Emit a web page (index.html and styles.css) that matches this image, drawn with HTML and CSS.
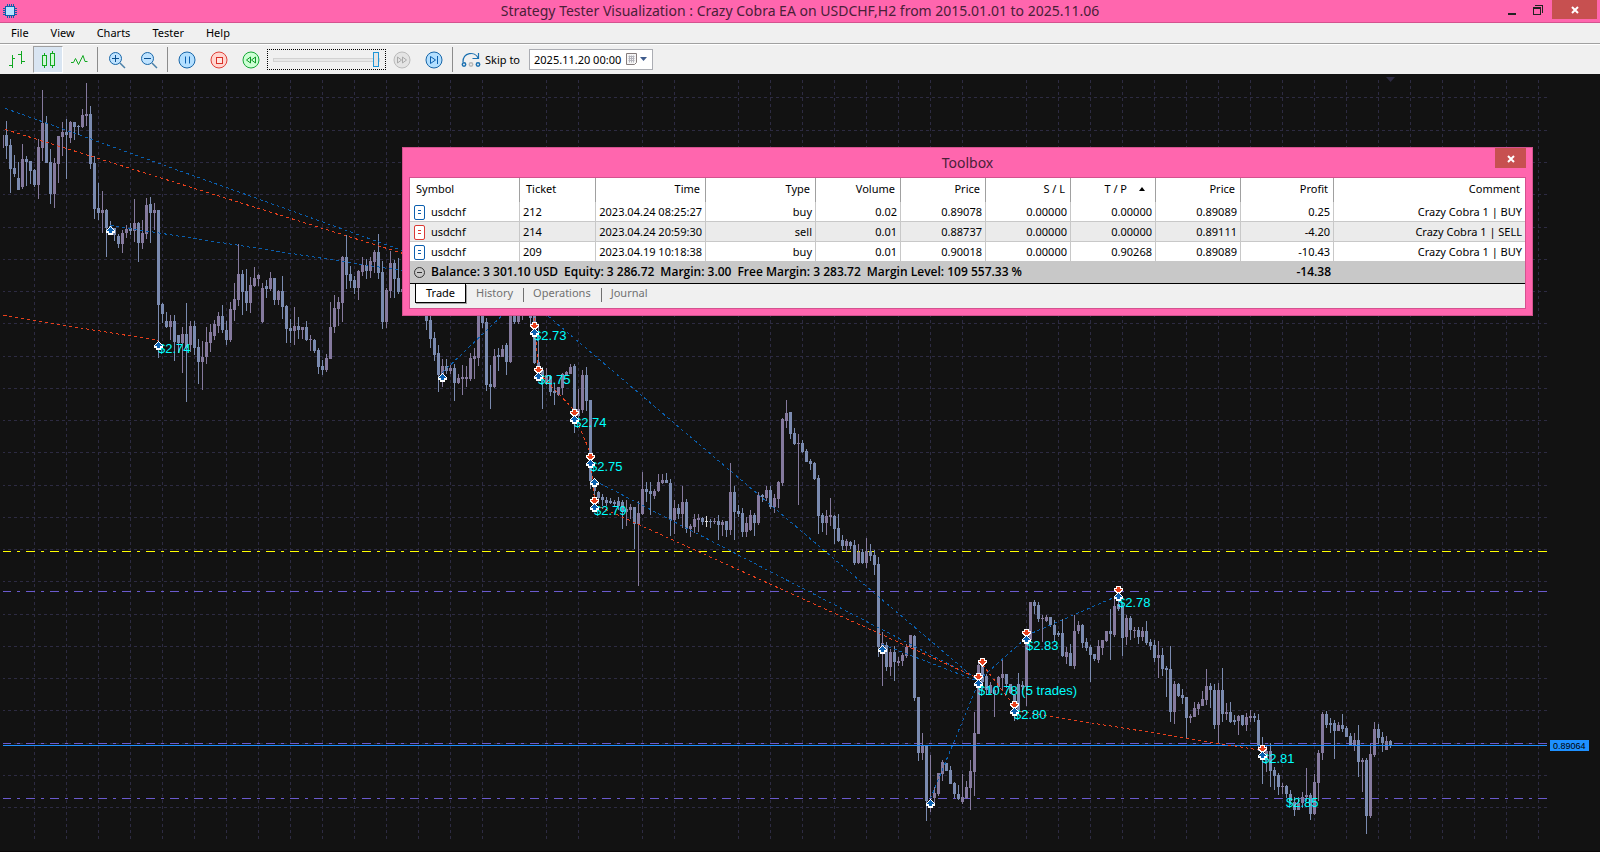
FILE: index.html
```html
<!DOCTYPE html>
<html lang="en">
<head>
    <meta charset="UTF-8">
    <meta name="viewport" content="width=device-width, initial-scale=1.0">
    <title>Strategy Tester Visualization</title>
    <link rel="stylesheet" href="styles.css">
</head>
<body>
    <header class="titlebar">
        <svg class="app-icon" width="16" height="16" viewBox="0 0 16 16" shape-rendering="crispEdges">
            <path d="M5.5 1v14M7.5 1v14M9.5 1v14M11.5 1v14M1 5.5h14M1 7.5h14M1 9.5h14M1 11.5h14" stroke="#1060a8"/>
            <rect x="3.5" y="3.5" width="9" height="9" rx="1" fill="#b9e2ff" stroke="#0b5fae"/>
        </svg>
        <h1 class="titlebar-text">Strategy Tester Visualization : Crazy Cobra EA on USDCHF,H2 from 2015.01.01 to 2025.11.06</h1>
        <div class="window-buttons">
            <button class="win-btn" aria-label="Minimize">
                <svg width="8" height="10" viewBox="0 0 8 10"><path d="M0 8h8v2H0z" fill="#222"/></svg>
            </button>
            <button class="win-btn" aria-label="Restore">
                <svg width="10" height="10" viewBox="0 0 10 10" shape-rendering="crispEdges" fill="#222"><path d="M2 0h8v8H9V1H2z"/><path d="M0 2h8v8H0zM1 4v5h6V4z" fill-rule="evenodd"/></svg>
            </button>
            <button class="win-close" aria-label="Close">
                <svg width="8" height="8" viewBox="0 0 8 8"><path d="M1 1l6 6M7 1L1 7" stroke="#fff" stroke-width="2"/></svg>
            </button>
        </div>
    </header>

    <nav class="menubar">
        <a href="#">File</a>
        <a href="#">View</a>
        <a href="#">Charts</a>
        <a href="#">Tester</a>
        <a href="#">Help</a>
    </nav>

    <div class="toolbar">
        <button class="tool" aria-label="Bar chart">
            <svg width="18" height="18" viewBox="0 0 18 18" shape-rendering="crispEdges"><path d="M4.5 4v13M1 14.5h3M4 7.5h3M13.5 0v13M10 3.5h3M14 10.5h3" stroke="#10a820" fill="none"/></svg>
        </button>
        <button class="tool active" aria-label="Candlesticks">
            <svg width="16" height="18" viewBox="0 0 16 18" shape-rendering="crispEdges"><path d="M2.5 4.5h4v10h-4zM10.5 2.5h4v12h-4zM4.5 2v2M4.5 15v2M12.5 0v2M12.5 15v2" stroke="#10a820" fill="#d0f8d8"/></svg>
        </button>
        <button class="tool" aria-label="Line chart">
            <svg width="18" height="18" viewBox="0 0 18 18"><path d="M1 11.5h2.5l2-4 3 6 4.5-9 2 6h2.5" stroke="#10a820" fill="none"/></svg>
        </button>
        <span class="sep"></span>
        <button class="tool" aria-label="Zoom in">
            <svg width="18" height="18" viewBox="0 0 18 18"><path d="M12 12l5 5" stroke="#4a80a8" stroke-width="1.5"/><circle cx="7.5" cy="7.5" r="6" fill="#bfe3ff" stroke="#1866a8"/><path d="M4 7.5h7M7.5 4v7" stroke="#0b4f90"/></svg>
        </button>
        <button class="tool" aria-label="Zoom out">
            <svg width="18" height="18" viewBox="0 0 18 18"><path d="M12 12l5 5" stroke="#4a80a8" stroke-width="1.5"/><circle cx="7.5" cy="7.5" r="6" fill="#bfe3ff" stroke="#1866a8"/><path d="M4 7.5h7" stroke="#0b4f90"/></svg>
        </button>
        <span class="sep"></span>
        <button class="tool" aria-label="Pause">
            <svg width="18" height="18" viewBox="0 0 18 18"><circle cx="9" cy="9" r="8" fill="#b3dfff" stroke="#1866a8"/><path d="M7.5 5.5v7M11.5 5.5v7" stroke="#0b5fae"/></svg>
        </button>
        <button class="tool" aria-label="Stop">
            <svg width="18" height="18" viewBox="0 0 18 18"><circle cx="9" cy="9" r="8" fill="#ffd6d0" stroke="#e04038"/><rect x="6.5" y="6.5" width="6" height="6" fill="#ffe6e0" stroke="#d83028"/></svg>
        </button>
        <button class="tool" aria-label="Slower">
            <svg width="18" height="18" viewBox="0 0 18 18"><circle cx="9" cy="9" r="8" fill="#ccffd4" stroke="#18a838"/><path d="M8.5 6v6l-4-3zM13.5 6v6l-4-3z" stroke="#109828" fill="none"/></svg>
        </button>
        <div class="speed"><input type="range" min="0" max="100" value="100" aria-label="Speed"></div>
        <button class="tool" aria-label="Faster" disabled>
            <svg width="18" height="18" viewBox="0 0 18 18"><circle cx="9" cy="9" r="8" fill="#e4e4e4" stroke="#bbb"/><path d="M4.5 6v6l4-3zM9.5 6v6l4-3z" stroke="#aaa" fill="none"/></svg>
        </button>
        <button class="tool" aria-label="Next">
            <svg width="18" height="18" viewBox="0 0 18 18"><circle cx="9" cy="9" r="8" fill="#b3dfff" stroke="#1866a8"/><path d="M5.5 5.5v7l5-3.5zM12.5 5v8" stroke="#0b5fae" fill="none"/></svg>
        </button>
        <span class="sep"></span>
        <label class="skip" for="skipDate">
            <svg width="20" height="16" viewBox="0 0 20 16" fill="none" stroke="#1b70b0"><path d="M2 10C2 0 14 -1 17 6M17.5 1v5.500h-6" stroke-width="1.2"/><circle cx="3" cy="12.5" r="1.700" stroke-width="1.5"/><circle cx="10" cy="12.5" r="1.700" stroke="#b8b8b8" stroke-width="1.5"/><circle cx="17" cy="12.5" r="1.700" stroke-width="1.5"/></svg>
            Skip to
        </label>
        <div class="date-box">
            <input id="skipDate" type="text" value="2025.11.20 00:00">
            <button class="date-drop" aria-label="Open calendar">
                <svg width="22" height="13" viewBox="0 0 22 13"><path d="M.5.5h10v9l-2 2h-8z" fill="#f6f6f6" stroke="#857c7c"/><path d="M2.5 3.5h6M2.5 5.5h6M2.5 7.5h6M3.5 2.5v7M5.5 2.5v7M7.5 2.5v7" stroke="#b4b4bc"/><path d="M14 4h7l-3.5 4z" fill="#3f5c8c"/></svg>
            </button>
        </div>
    </div>

    <main class="chart">
        <svg id="chart" viewBox="0 74 1600 777" preserveAspectRatio="xMinYMin meet">
            <defs>
                <g id="buy">
                    <path d="M0 -4h1v1h1v1h1v1h1v1h1v3h-2v2h-5v-2h-2v-3h1v-1h1v-1h1v-1h1z" fill="#fff"/>
                    <path d="M0 -3h1v1h1v1h1v1h1v1h-2v2h-3v-2h-2v-1h1v-1h1v-1h1z" fill="#0a60b0"/>
                </g>
                <g id="sell">
                    <path d="M-2 -4h5v2h2v3h-1v1h-1v1h-1v1h-1v1h-1v-1h-1v-1h-1v-1h-1v-1h-1v-3h2z" fill="#fff"/>
                    <path d="M-1 -3h3v2h2v1h-1v1h-1v1h-1v1h-1v-1h-1v-1h-1v-1h-1v-1h2z" fill="#e8401c"/>
                </g>
            </defs>
        </svg>

        <section class="toolbox">
            <div class="toolbox-title">
                <h2>Toolbox</h2>
                <button class="toolbox-close" aria-label="Close toolbox">
                    <svg width="8" height="8" viewBox="0 0 8 8"><path d="M1 1l6 6M7 1L1 7" stroke="#fff" stroke-width="2"/></svg>
                </button>
            </div>
            <div class="toolbox-body">
                <table class="trades">
                    <colgroup>
                        <col class="w-symbol"><col class="w-ticket"><col class="w-wide"><col class="w-wide"><col class="w-price">
                        <col class="w-price"><col class="w-price"><col class="w-price"><col class="w-price"><col class="w-profit"><col>
                    </colgroup>
                    <thead>
                        <tr>
                            <th class="left">Symbol</th><th class="left">Ticket</th><th>Time</th><th>Type</th><th>Volume</th><th>Price</th>
                            <th>S / L</th><th>T / P<span class="sort"></span></th><th>Price</th><th>Profit</th><th>Comment</th>
                        </tr>
                    </thead>
                    <tbody>
                        <tr>
                            <td class="symbol"><svg class="order" width="11" height="15" viewBox="0 0 11 15"><rect x=".5" y=".5" width="10" height="14" rx="1.5"/><path d="M4 5.5h3M4 8.5h3"/></svg>usdchf</td>
                            <td class="left">212</td><td>2023.04.24 08:25:27</td><td>buy</td><td>0.02</td><td>0.89078</td>
                            <td>0.00000</td><td>0.00000</td><td>0.89089</td><td>0.25</td><td>Crazy Cobra 1 | BUY</td>
                        </tr>
                        <tr class="alt">
                            <td class="symbol"><svg class="order order-sell" width="11" height="15" viewBox="0 0 11 15"><rect x=".5" y=".5" width="10" height="14" rx="1.5"/><path d="M4 5.5h3M4 8.5h3"/></svg>usdchf</td>
                            <td class="left">214</td><td>2023.04.24 20:59:30</td><td>sell</td><td>0.01</td><td>0.88737</td>
                            <td>0.00000</td><td>0.00000</td><td>0.89111</td><td>-4.20</td><td>Crazy Cobra 1 | SELL</td>
                        </tr>
                        <tr>
                            <td class="symbol"><svg class="order" width="11" height="15" viewBox="0 0 11 15"><rect x=".5" y=".5" width="10" height="14" rx="1.5"/><path d="M4 5.5h3M4 8.5h3"/></svg>usdchf</td>
                            <td class="left">209</td><td>2023.04.19 10:18:38</td><td>buy</td><td>0.01</td><td>0.90018</td>
                            <td>0.00000</td><td>0.90268</td><td>0.89089</td><td>-10.43</td><td>Crazy Cobra 1 | BUY</td>
                        </tr>
                    </tbody>
                    <tfoot>
                        <tr>
                            <td class="symbol" colspan="9"><svg width="11" height="11" viewBox="0 0 11 11" fill="none" stroke="#333"><circle cx="5.5" cy="5.5" r="5"/><path d="M3 5.5h5"/></svg><span>Balance: 3 301.10 USD</span><span>Equity: 3 286.72</span><span>Margin: 3.00</span><span>Free Margin: 3 283.72</span><span>Margin Level: 109 557.33 %</span></td>
                            <td>-14.38</td>
                            <td></td>
                        </tr>
                    </tfoot>
                </table>
                <div class="tabs">
                    <button class="tab current">Trade</button>
                    <button class="tab">History</button>
                    <button class="tab">Operations</button>
                    <button class="tab">Journal</button>
                </div>
            </div>
        </section>
    </main>

    <script src="chart.js"></script>
</body>
</html>
```

FILE: styles.css
```css
* {
    margin: 0;
    padding: 0;
    box-sizing: border-box;
}

body {
    font-family: "Segoe UI", "Noto Sans", sans-serif;
    font-size: 11px;
    color: #000;
    background: #121212;
    min-height: 100vh;
    display: flex;
    flex-direction: column;
}

button {
    font: inherit;
    color: inherit;
    border: none;
    background: none;
}

/* Title bar */
.titlebar {
    position: relative;
    height: 23px;
    background: #ff66ae;
    border-bottom: 1px solid #d4528f;
    display: flex;
    align-items: center;
    justify-content: center;
}

.app-icon {
    position: absolute;
    left: 2px;
    top: 3px;
}

.titlebar-text {
    font-size: 14px;
    font-weight: 400;
    line-height: 22px;
    color: #4a2038;
}

.window-buttons {
    position: absolute;
    top: 0;
    right: 3px;
    display: flex;
    height: 19px;
}

.win-btn {
    width: 26px;
    display: flex;
    align-items: center;
    justify-content: center;
}

.win-close {
    width: 45px;
    margin-left: 1px;
    background: #c75050;
}

/* Menu */
.menubar {
    height: 21px;
    background: #f0f0f0;
    border-bottom: 1px solid #a0a0a0;
    display: flex;
    gap: 22px;
    padding-left: 11px;
}

.menubar a {
    color: #000;
    text-decoration: none;
    line-height: 20px;
}

/* Toolbar */
.toolbar {
    height: 30px;
    background: #f0f0f0;
    border-top: 1px solid #fff;
    display: flex;
    align-items: center;
}

.tool {
    width: 32px;
    height: 28px;
    display: flex;
    align-items: center;
    justify-content: center;
}

.tool.active {
    width: 30px;
    height: 27px;
    background: #d9e5f2;
    border: 1px solid #fff;
    border-top-color: #a0a0a0;
    border-left-color: #a0a0a0;
}

.tool:first-child {
    width: 33px;
}

.sep {
    width: 1px;
    height: 25px;
    margin: 0 3px 0 2px;
    background: #8c8c8c;
}

.speed {
    width: 119px;
    height: 21px;
    padding: 0 5px;
    border: 1px dotted #000;
    display: flex;
    align-items: center;
}

.speed input {
    width: 100%;
    height: 16px;
    appearance: none;
    background: none;
}

.speed input::-webkit-slider-runnable-track {
    height: 4px;
    background: #e7e7e7;
    border: 1px solid #d2d2d2;
}

.speed input::-webkit-slider-thumb {
    appearance: none;
    width: 6px;
    height: 15px;
    margin-top: -7px;
    background: #e5e5e5;
    border: 1px solid #1e96d8;
}

.skip {
    display: flex;
    align-items: center;
    gap: 4px;
    margin-left: 5px;
}

.date-box {
    width: 124px;
    height: 21px;
    margin-left: 9px;
    background: #fff;
    border: 1px solid #abadb3;
    display: flex;
    align-items: center;
}

.date-box input {
    width: 96px;
    padding-left: 4px;
    border: none;
    background: none;
    font: inherit;
}

.date-drop {
    display: flex;
}

/* Chart */
.chart {
    position: relative;
    flex: 1;
    background: #121212;
    border-bottom: 1px solid #0a0708;
}

#chart {
    display: block;
    width: 100%;
}

.grid {
    stroke: #2d2b42;
    stroke-dasharray: 3 3;
}

.level {
    stroke-dasharray: 9 6 3 6;
}

.trend {
    fill: none;
    stroke-dasharray: 3 3;
}

.trade-label {
    font: 13px "Liberation Sans", Arial, sans-serif;
    fill: #00ffff;
}

.price-label {
    font: 9px "Liberation Sans", Arial, sans-serif;
    fill: #000;
}

/* Toolbox window */
.toolbox {
    position: absolute;
    top: 73px;
    left: 402px;
    right: 67px;
    padding: 0 6px 6px;
    background: #ff66ae;
    border: 1px solid #d4528f;
}

.toolbox-title {
    height: 29px;
    display: flex;
    justify-content: center;
    position: relative;
}

.toolbox-title h2 {
    font-size: 14px;
    font-weight: 400;
    line-height: 29px;
    color: #4a2038;
}

.toolbox-close {
    position: absolute;
    top: 0;
    right: 0;
    width: 31px;
    height: 20px;
    background: #c75050;
}

.toolbox-body {
    background: #f0f0f0;
    border: 1px solid #d4528f;
}

.trades {
    width: 100%;
    table-layout: fixed;
    border-spacing: 0;
    background: #fff;
}

.w-symbol,
.w-wide {
    width: 110px;
}

.w-ticket {
    width: 76px;
}

.w-price {
    width: 85px;
}

.w-profit {
    width: 93px;
}

.trades th,
.trades td {
    text-align: right;
    white-space: nowrap;
    border-right: 1px solid #c8c8c8;
    padding: 0 3px;
}

.trades th {
    height: 24px;
    padding: 0 5px 2px;
    line-height: 20px;
    font-weight: 400;
    border-right-color: #a0a0a0;
}

.trades td {
    height: 20px;
    line-height: 18px;
    border-bottom: 1px solid #c8c8c8;
}

.trades th.left {
    text-align: left;
    padding-left: 6px;
}

.trades td.left {
    text-align: left;
}

.trades th:last-child,
.trades td:last-child {
    border-right: none;
}

.trades .alt td {
    background: #ebebeb;
}

.trades td.symbol {
    text-align: left;
    padding-left: 4px;
}

.symbol svg {
    vertical-align: middle;
    margin-right: 6px;
}

.order {
    fill: #fff;
    stroke: #0b5fae;
}

.order-sell {
    stroke: #d83a34;
}

.sort {
    display: inline-block;
    margin: 0 5px 2px 12px;
    border: 3px solid transparent;
    border-top: none;
    border-bottom: 4px solid #000;
}

.trades tfoot td {
    height: 21px;
    padding-bottom: 2px;
    background: #c8c8c8;
    border: none;
    font-family: "Open Sans", "Noto Sans", sans-serif;
    font-size: 12px;
    font-weight: 600;
}

.trades tfoot span {
    margin-right: 6px;
}

.tabs {
    display: flex;
    height: 25px;
    padding-left: 5px;
    border-top: 1px solid #000;
    align-items: flex-start;
}

.tab {
    position: relative;
    padding: 0 10px;
    line-height: 18px;
    color: #707070;
}

.tab.current {
    color: #000;
    background: #fff;
    border: 1px solid #000;
    border-top: none;
    box-shadow: 1px 1px 0 #a0a0a0;
}

.tab + .tab + .tab {
    background: linear-gradient(#707070, #707070) left 4px / 1px 14px no-repeat;
}
```

FILE: chart.js
```js
const SVG = 'http://www.w3.org/2000/svg';
const chart = document.getElementById('chart');

// x, high, low, body top, body bottom, direction (1 up, 0 down)
const candles = [
    [2,135,148,135,148,1],[6,121,159,135,146,0],[10,139,193,145,169,0],[14,155,177,168,174,0],[18,162,190,178,190,0],
    [22,144,189,159,187,1],[26,156,186,159,162,0],[30,161,184,161,171,0],[34,169,187,170,185,0],[38,139,199,147,185,1],
    [42,90,161,123,148,1],[46,116,163,123,163,0],[50,149,204,162,194,0],[54,158,208,163,194,1],[58,136,183,136,164,1],
    [62,122,156,132,137,1],[66,119,179,132,135,0],[70,121,143,122,138,1],[74,122,140,122,127,0],[78,125,135,126,127,0],
    [82,109,128,115,127,1],[86,83,126,114,116,1],[90,106,169,114,164,0],[94,156,219,163,209,0],[98,183,220,208,213,0],
    [102,191,233,210,213,1],[106,209,257,210,228,0],[110,221,233,226,232,0],[114,228,241,228,235,0],[118,234,248,236,244,0],
    [122,230,253,233,244,1],[126,225,238,229,233,1],[130,223,235,228,231,0],[134,199,242,223,231,1],[138,222,262,223,243,0],
    [142,220,249,233,243,1],[146,198,239,205,234,1],[150,197,243,204,213,0],[154,203,230,210,213,1],[158,210,358,210,305,0],
    [162,303,323,304,314,0],[166,312,328,321,327,0],[170,315,340,321,327,1],[174,315,361,321,342,0],[178,335,353,335,343,0],
    [182,327,373,334,343,1],[186,303,402,334,348,0],[190,321,352,326,345,1],[194,321,355,326,348,0],[198,339,384,347,362,0],
    [202,341,390,357,362,1],[206,327,364,342,357,1],[210,324,352,332,343,1],[214,320,340,324,336,1],[218,312,333,316,326,1],
    [222,305,333,316,330,0],[226,321,345,330,340,0],[230,302,342,309,340,1],[234,283,321,299,310,1],[238,244,306,274,300,1],
    [242,270,315,274,292,0],[246,269,311,291,303,0],[250,277,313,285,303,1],[254,267,287,278,286,1],[258,274,286,275,279,1],
    [262,283,323,288,322,1],[266,280,298,286,289,0],[270,272,291,278,289,1],[274,278,305,278,300,0],[278,290,305,291,300,1],
    [282,276,319,291,307,0],[286,305,343,306,329,0],[290,319,343,328,331,0],[294,307,345,326,331,1],[298,317,339,326,330,0],
    [302,327,339,327,330,1],[306,321,341,327,340,0],[310,335,351,339,340,1],[314,339,353,340,351,0],[318,348,374,350,367,0],
    [322,360,375,366,370,0],[326,354,372,358,370,1],[330,302,359,327,359,1],[334,295,333,308,327,1],[338,297,326,302,309,1],
    [342,256,322,257,303,1],[346,235,289,257,275,0],[350,266,288,274,281,0],[354,276,294,280,288,0],[358,270,300,271,288,1],
    [362,257,276,265,272,1],[366,259,279,265,271,0],[370,257,278,261,271,1],[374,250,273,252,262,1],[378,234,279,252,273,0],
    [382,261,329,272,322,0],[386,288,328,290,322,1],[390,251,298,263,291,1],[394,260,298,263,279,0],[398,258,294,278,292,0],
    [402,280,300,289,292,1],[426,300,330,300,321,0],[430,315,348,320,339,0],[434,332,361,338,355,0],[438,345,392,353,375,0],
    [442,359,387,366,375,1],[446,359,374,366,371,0],[450,365,374,368,371,1],[454,364,401,368,383,0],[458,374,384,378,383,1],
    [462,365,395,377,379,1],[466,366,387,377,379,1],[470,353,381,358,379,1],[474,348,379,356,359,1],[478,300,366,300,358,1],
    [482,300,328,300,323,0],[486,318,391,322,385,0],[490,365,409,384,387,0],[494,349,388,356,387,1],[498,348,371,355,357,0],
    [502,345,357,349,357,1],[506,343,375,345,362,0],[510,300,363,300,362,1],[514,300,324,300,322,0],[518,300,324,300,322,1],
    [522,300,320,300,310,1],[530,300,325,300,318,0],[534,300,364,300,363,0],[538,327,375,362,375,0],[542,367,409,370,380,0],
    [546,368,385,375,384,1],[550,375,396,376,392,0],[554,383,405,391,393,0],[558,387,396,387,395,1],[562,373,395,374,388,1],
    [566,371,376,372,376,1],[570,364,374,367,374,1],[574,364,433,366,410,0],[578,389,420,409,416,1],[582,370,413,375,410,1],
    [586,367,411,375,401,0],[590,400,489,400,481,0],[594,480,506,483,491,0],[598,491,504,492,498,0],[602,494,506,497,500,0],
    [606,497,506,500,503,0],[610,498,504,501,503,0],[614,500,506,502,504,0],[618,497,510,501,506,0],[622,500,529,502,512,0],
    [626,500,526,509,512,1],[630,504,519,507,510,1],[634,507,549,507,524,0],[638,501,586,513,524,1],[642,472,515,489,514,1],
    [646,482,502,489,492,0],[650,482,515,491,494,0],[654,489,499,491,496,1],[658,474,492,482,491,1],[662,474,484,480,483,1],
    [666,473,483,480,483,0],[670,479,536,483,520,0],[674,500,534,508,520,1],[678,504,519,508,514,0],[682,486,528,502,514,1],
    [686,499,533,502,529,0],[690,524,537,526,529,1],[694,514,533,519,527,1],[698,514,532,518,520,1],[702,517,525,518,522,0],
    [706,516,527,521,522,2],[710,519,528,521,522,0],[714,518,524,521,522,1],[718,515,540,521,525,0],[722,520,536,522,525,1],
    [726,521,537,521,530,0],[730,463,535,492,530,1],[734,486,540,492,512,0],[738,505,517,511,514,0],[742,508,537,513,532,0],
    [746,517,537,523,532,1],[750,510,531,515,530,1],[754,513,536,515,523,0],[758,492,525,495,523,1],[762,494,502,495,497,0],
    [766,486,501,490,498,1],[770,486,509,490,507,0],[774,494,513,498,507,1],[778,481,508,482,499,1],[782,418,486,419,483,1],
    [786,400,428,413,421,1],[790,412,439,412,434,0],[794,428,445,433,444,0],[798,434,505,443,444,1],[802,440,453,443,452,0],
    [806,449,462,451,462,0],[810,459,470,461,464,0],[814,462,480,463,479,0],[818,475,534,478,516,0],[822,513,532,515,523,0],
    [826,510,535,516,523,1],[830,498,526,515,517,1],[834,515,544,516,529,0],[838,514,542,528,541,0],[842,535,550,540,546,0],
    [846,539,552,541,546,1],[850,541,549,542,546,0],[854,540,565,545,563,0],[858,544,564,552,563,1],[862,549,564,552,563,0],
    [866,538,568,551,563,1],[870,544,561,551,556,0],[874,550,575,555,565,0],[878,557,657,564,647,0],[882,632,686,643,652,1],
    [886,642,671,645,667,0],[890,649,676,652,667,1],[894,646,681,652,662,0],[898,657,666,661,663,1],[902,653,666,655,661,1],
    [906,644,658,647,656,1],[910,635,648,635,647,1],[914,635,701,636,698,0],[918,697,761,697,753,0],[922,733,760,745,753,1],
    [926,745,821,746,801,0],[930,755,812,800,804,1],[934,787,805,793,798,1],[938,773,796,773,794,1],[942,760,781,762,774,1],
    [946,763,771,763,771,0],[950,766,784,770,784,0],[954,782,798,783,794,0],[958,785,800,794,799,0],[962,774,804,797,802,1],
    [966,781,799,787,798,1],[970,760,810,771,788,1],[974,712,796,733,772,1],[978,660,734,665,734,1],[982,660,690,662,682,0],
    [986,674,695,676,690,0],[990,682,694,685,693,1],[994,687,717,690,694,1],[998,676,692,677,687,1],[1002,659,690,674,678,1],
    [1006,674,688,674,684,0],[1010,684,694,684,693,0],[1014,694,721,695,710,0],[1018,673,712,684,710,0],[1022,681,690,685,687,0],
    [1026,640,706,640,687,1],[1030,602,641,602,640,1],[1034,600,614,602,606,0],[1038,602,622,605,619,0],[1042,615,642,618,619,1],
    [1046,615,622,617,621,1],[1050,617,627,617,625,0],[1054,620,641,625,635,0],[1058,631,637,633,635,0],[1062,619,657,633,656,0],
    [1066,647,664,652,657,1],[1070,644,666,653,666,0],[1074,615,669,631,666,1],[1078,621,634,625,631,1],[1082,624,648,625,643,0],
    [1086,638,651,642,648,0],[1090,645,682,647,655,0],[1094,654,661,654,659,0],[1098,640,663,646,660,1],[1102,640,655,640,648,1],
    [1106,631,642,631,641,1],[1110,609,660,631,634,0],[1114,596,637,606,635,1],[1118,594,611,604,609,0],[1122,603,656,606,638,0],
    [1126,615,645,618,637,1],[1130,616,640,618,630,0],[1134,627,638,630,631,1],[1138,627,644,630,637,0],[1142,627,641,631,637,1],
    [1146,621,645,631,643,0],[1150,639,650,642,646,0],[1154,640,662,645,658,0],[1158,641,678,655,658,1],[1162,648,676,655,669,0],
    [1166,666,697,668,670,0],[1170,646,722,669,712,0],[1174,681,724,684,712,1],[1178,683,697,684,696,0],[1182,689,704,695,698,0],
    [1186,697,739,697,718,0],[1190,714,723,716,718,1],[1194,702,717,708,717,1],[1198,702,715,704,709,1],[1202,691,706,699,706,1],
    [1206,669,705,686,700,1],[1210,683,708,686,690,0],[1214,684,729,690,725,0],[1218,683,744,690,725,1],[1222,668,722,690,714,0],
    [1226,703,720,712,714,1],[1230,702,723,712,722,0],[1234,715,725,720,722,0],[1238,715,735,716,721,1],[1242,715,726,715,725,0],
    [1246,713,731,717,725,1],[1250,710,722,716,718,1],[1254,713,722,716,718,0],[1258,714,751,720,745,0],[1262,737,784,745,757,0],
    [1266,745,772,751,760,1],[1270,743,787,751,771,0],[1274,767,790,770,776,0],[1278,773,795,775,787,0],[1282,783,794,786,787,1],
    [1286,785,798,786,794,0],[1290,790,805,794,801,0],[1294,797,816,802,810,0],[1298,797,810,803,810,1],[1302,792,808,797,803,1],
    [1306,768,801,795,797,1],[1310,793,820,795,814,0],[1314,774,815,782,814,1],[1318,750,801,753,783,1],[1322,712,760,714,753,1],
    [1326,711,728,714,725,0],[1330,718,733,723,725,0],[1334,720,759,723,731,0],[1338,722,731,725,731,1],[1342,714,732,725,729,0],
    [1346,726,737,728,737,0],[1350,733,746,736,746,0],[1354,733,751,740,745,1],[1358,725,777,740,762,0],[1362,758,792,760,762,1],
    [1366,758,834,760,816,0],[1370,744,818,754,816,1],[1374,722,757,729,755,1],[1378,724,744,729,738,0],[1382,732,752,737,743,0],
    [1386,736,750,741,750,1],[1390,740,748,741,746,0]
];

const BLUE = '#0a5fae';
const RED = '#e8401c';

// x1, y1, x2, y2, colour
const trends = [
    [5,108,536,298,BLUE],[110,225,530,290,BLUE],[442,372,534,284,BLUE],[534,304,978,681,BLUE],
    [594,480,978,679,BLUE],[882,644,978,681,BLUE],[930,798,978,682,BLUE],[978,680,1026,637,BLUE],[1026,635,1118,595,BLUE],
    [5,129,534,294,RED],[3,315,158,340,RED],[532,300,538,370,RED],[538,372,574,410,RED],[574,414,590,453,RED],
    [590,458,594,500,RED],[594,504,978,678,RED],[982,664,1014,706,RED],[1014,710,1262,750,RED]
];

const buys = [[110,230],[158,345],[442,377],[534,332],[538,376],[574,419],[590,463],[594,482],[594,507],[882,649],
    [978,683],[1014,711],[1026,639],[1118,596],[930,803],[1262,755]];
const sells = [[534,326],[538,370],[574,413],[590,457],[594,501],[978,677],[982,662],[1014,705],[1026,633],[1118,590],[1262,749]];

const labels = [[158,353,'$2.74'],[534,340,'$2.73'],[538,384,'$2.75'],[574,427,'$2.74'],[590,471,'$2.75'],[594,515,'$2.79'],
    [978,695,'$10.78 (5 trades)'],[1014,719,'$2.80'],[1026,650,'$2.83'],[1118,607,'$2.78'],[1262,763,'$2.81'],[1286,807,'$2.85']];

function add(name, attrs, text) {
    const el = document.createElementNS(SVG, name);
    for (const key in attrs) el.setAttribute(key, attrs[key]);
    if (text) el.textContent = text;
    chart.appendChild(el);
}

function line(x1, y1, x2, y2, cls, stroke) {
    const attrs = { x1, y1, x2, y2, class: cls, 'shape-rendering': 'crispEdges' };
    if (stroke) attrs.stroke = stroke;
    add('line', attrs);
}

// Grid, some columns are left out by the terminal
const skipped = [514, 610, 706, 994];
for (let x = 34; x <= 1538; x += 32) {
    if (!skipped.includes(x)) line(x + 0.5, 839, x + 0.5, 77, 'grid');
}
[97,130,162,194,227,259,291,323,356,388,420,452,485,517,549,581,614,646,678,710,743,775,807].forEach(y => {
    line(2, y + 0.5, 1547, y + 0.5, 'grid');
});

// Levels
line(2, 551.5, 1547, 551.5, 'level', '#ffff00');
[591.5, 743.5, 798.5].forEach(y => line(2, y, 1547, y, 'level', '#6a5acd'));

const fills = ['#7b8bb0', '#857a9e', '#d8d8d8'];
candles.forEach(([x, high, low, top, bottom, dir]) => {
    add('path', {
        d: `M${x} ${high}h1v${low - high}h-1zM${x - 1} ${top}h3v${bottom - top}h-3z`,
        fill: fills[dir],
        'shape-rendering': 'crispEdges'
    });
});

// Left margin hides what runs past the plot area
add('rect', { x: 0, y: 74, width: 3, height: 777, fill: '#121212' });

line(3, 745.5, 1547, 745.5, '', '#1e90ff');
trends.forEach(([x1, y1, x2, y2, colour]) => line(x1 + 0.5, y1 + 0.5, x2 + 0.5, y2 + 0.5, 'trend', colour));
labels.forEach(([x, y, text]) => add('text', { x, y, class: 'trade-label' }, text));
sells.forEach(([x, y]) => add('use', { href: '#sell', x, y }));
buys.forEach(([x, y]) => add('use', { href: '#buy', x, y }));

// Shift marker and current price
add('path', { d: 'M1386 77h9l-4.5 5z', fill: '#2d2b42' });
add('rect', { x: 1550, y: 740, width: 39, height: 11, fill: '#1e90ff' });
add('text', { x: 1553, y: 749, class: 'price-label' }, '0.89064');
```
